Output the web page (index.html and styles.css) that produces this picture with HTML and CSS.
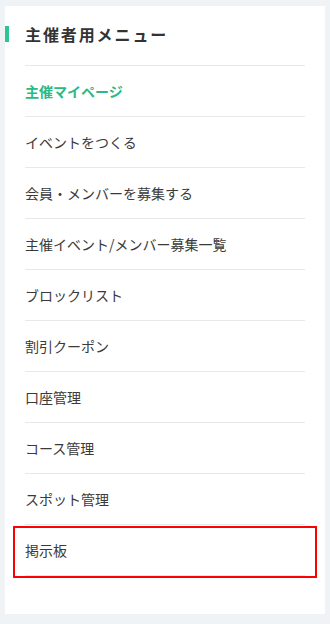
FILE: index.html
```html
<!DOCTYPE html>
<html lang="ja">
<head>
<meta charset="utf-8">
<link rel="stylesheet" href="styles.css">
</head>
<body>
<div class="wrap">
  <div class="card">
    <h2 class="title">主催者用メニュー</h2>
    <ul class="menu">
      <li class="item active">主催マイページ</li>
      <li class="item">イベントをつくる</li>
      <li class="item">会員・メンバーを募集する</li>
      <li class="item">主催イベント/メンバー募集一覧</li>
      <li class="item">ブロックリスト</li>
      <li class="item">割引クーポン</li>
      <li class="item">口座管理</li>
      <li class="item">コース管理</li>
      <li class="item">スポット管理</li>
      <li class="item last">掲示板<span class="highlight"></span></li>
    </ul>
  </div>
</div>
</body>
</html>
```
FILE: styles.css
```css
html, body {
  margin: 0;
  padding: 0;
  background: #eff3f6;
  font-family: "Noto Sans CJK JP", "Noto Sans", sans-serif;
  color: #333;
}
.wrap {
  padding: 6px 5px 10px 5px;
}
.card {
  background: #fff;
  height: 608px;
  padding: 20px 20px 0 20px;
  box-sizing: border-box;
}
.title {
  margin: 0 0 23px -20px;
  padding-left: 16px;
  border-left: 4px solid #2ec48f;
  font-size: 16px;
  line-height: 16px;
  height: 16px;
  font-weight: 700;
  letter-spacing: 1.9px;
  color: #333;
}
.menu {
  list-style: none;
  margin: 0;
  padding: 0;
}
.item {
  position: relative;
  border-top: 1px solid #e8e8e8;
  height: 50px;
  display: flex;
  align-items: center;
  font-size: 14px;
  color: #3a3a3a;
}
.item.active {
  color: #2ab987;
  font-weight: 700;
}
.item.last {
  border-bottom: 1px solid #e8e8e8;
}
.highlight {
  position: absolute;
  top: 1px;
  left: -12px;
  right: -12px;
  bottom: -3px;
  border: 2px solid #ff0000;
}
```
